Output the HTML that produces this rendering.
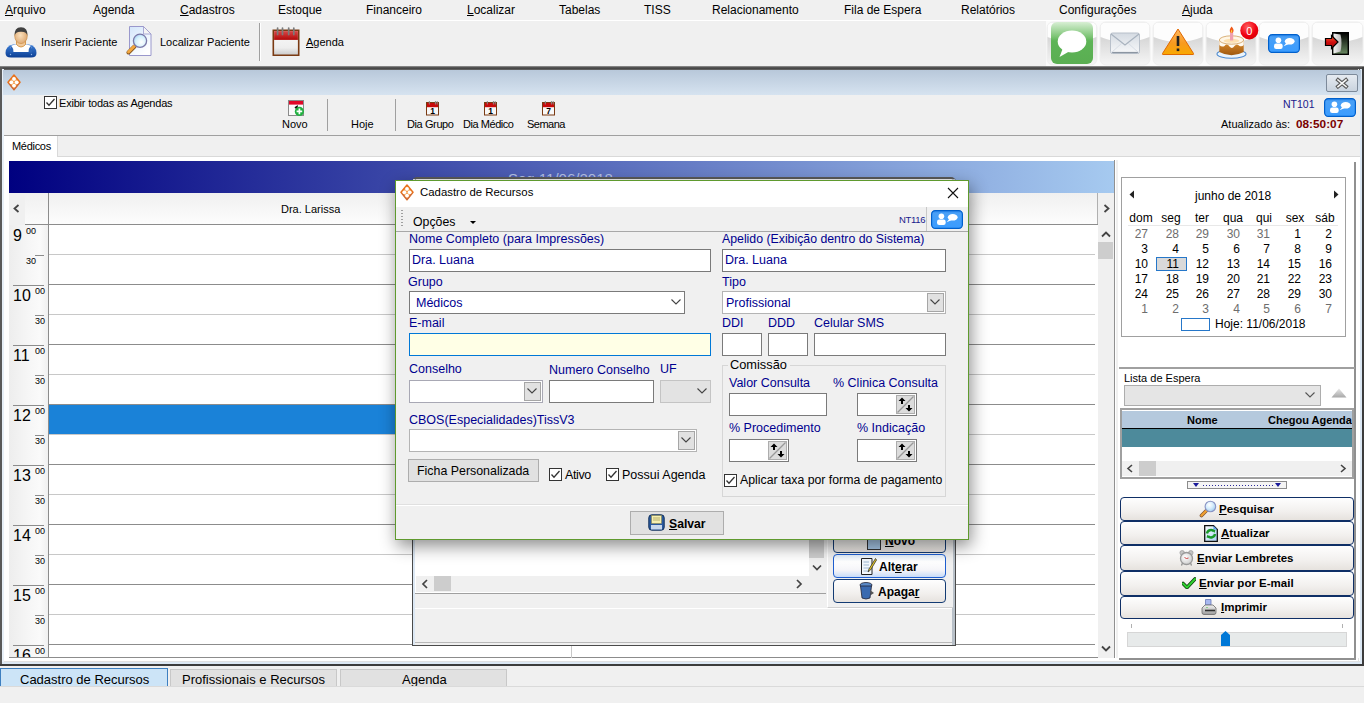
<!DOCTYPE html>
<html><head><meta charset="utf-8">
<style>
*{box-sizing:border-box;margin:0;padding:0}
html,body{width:1364px;height:703px;overflow:hidden;background:#f0f0f0;font-family:"Liberation Sans",sans-serif;font-size:12px;color:#000}
.a{position:absolute}
.t{position:absolute;white-space:nowrap;line-height:1}
u{text-decoration:underline}
</style></head><body>
<svg width="0" height="0" style="position:absolute"><defs>
<linearGradient id="chg" x1="0" y1="0" x2="0" y2="1"><stop offset="0" stop-color="#2a86ee"/><stop offset="0.15" stop-color="#4aa0f6"/><stop offset="1" stop-color="#3a9cff"/></linearGradient>
<symbol id="chat" viewBox="0 0 32 19">
<rect x="0.6" y="0.6" width="30.8" height="17.8" rx="3.6" fill="url(#chg)" stroke="#0060cc" stroke-width="1.2"/>
<circle cx="10.4" cy="6.3" r="2.8" fill="#fff"/>
<rect x="6" y="9.6" width="8.7" height="5.4" rx="2.2" fill="#fff"/>
<ellipse cx="21.7" cy="7.3" rx="4.9" ry="3.3" fill="#fff"/>
<path d="M18.3 9 L15.6 12.2 L20.2 10.2Z" fill="#fff"/>
</symbol></defs></svg>

<!-- MENU BAR -->
<div class="a" style="left:0;top:0;width:1364px;height:20px;background:#f0f0f0"></div>
<div class="a" style="left:0;top:20px;width:1364px;height:1px;background:#fff"></div>
<div class="t" style="left:5px;top:4px;font-size:12px"><u>A</u>rquivo</div>
<div class="t" style="left:93px;top:4px;font-size:12px">Agenda</div>
<div class="t" style="left:180px;top:4px;font-size:12px"><u>C</u>adastros</div>
<div class="t" style="left:278px;top:4px;font-size:12px">Estoque</div>
<div class="t" style="left:366px;top:4px;font-size:12px">Financeiro</div>
<div class="t" style="left:467px;top:4px;font-size:12px"><u>L</u>ocalizar</div>
<div class="t" style="left:559px;top:4px;font-size:12px">Tabelas</div>
<div class="t" style="left:644px;top:4px;font-size:12px">TISS</div>
<div class="t" style="left:712px;top:4px;font-size:12px">Relacionamento</div>
<div class="t" style="left:844px;top:4px;font-size:12px">Fila de Espera</div>
<div class="t" style="left:961px;top:4px;font-size:12px">Relatórios</div>
<div class="t" style="left:1059px;top:4px;font-size:12px">Configurações</div>
<div class="t" style="left:1182px;top:4px;font-size:12px"><u>A</u>juda</div>

<!-- TOOLBAR -->
<div class="a" style="left:0;top:21px;width:1364px;height:46px;background:#f0f0f0"></div>
<svg class="a" style="left:5px;top:25px" width="32" height="33" viewBox="0 0 32 33">
 <defs><linearGradient id="pb" x1="0" y1="0" x2="0" y2="1"><stop offset="0" stop-color="#3d7ed6"/><stop offset="1" stop-color="#0c3f94"/></linearGradient>
 <radialGradient id="pf" cx="0.45" cy="0.45" r="0.6"><stop offset="0" stop-color="#fbe0bc"/><stop offset="1" stop-color="#dba670"/></radialGradient></defs>
 <path d="M0.5 28 Q0.5 21 8 19.5 L24 19.5 Q31.5 21 31.5 28 Q31.5 32.5 26 32.5 L6 32.5 Q0.5 32.5 0.5 28Z" fill="url(#pb)"/>
 <path d="M6.5 20.5 Q4.5 23 5 27 L27 27 Q27.5 23 25.5 20.5 L21 19.5 Q16 23 11 19.5Z" fill="#fff"/>
 <path d="M6.5 21 Q9 24 8.5 27.5 L5 27.5 Q4 24 6.5 21Z M25.5 21 Q23 24 23.5 27.5 L27 27.5 Q28 24 25.5 21Z" fill="#2a64b8"/>
 <circle cx="5.5" cy="29.5" r="0.7" fill="#8fb4e8"/><circle cx="26.5" cy="29.5" r="0.7" fill="#8fb4e8"/>
 <path d="M11.5 14 L11.5 19.5 Q16 24.5 20.5 19.5 L20.5 14Z" fill="#f0c89a" stroke="#d08a30" stroke-width="0.8"/>
 <ellipse cx="16" cy="11" rx="6.3" ry="7.6" fill="url(#pf)" stroke="#c88a40" stroke-width="0.6"/>
 <path d="M9.6 11 Q9 2.2 16 2.2 Q23 2.2 22.4 11 Q21.5 6.5 16 6.8 Q10.5 6.5 9.6 11Z" fill="#404040"/>
</svg>
<div class="t" style="left:41px;top:37px;font-size:11px">Inserir Paciente</div>
<svg class="a" style="left:126px;top:26px" width="26" height="30" viewBox="0 0 26 30">
 <defs><linearGradient id="dg" x1="0" y1="0" x2="0.6" y2="1"><stop offset="0" stop-color="#d4e6fb"/><stop offset="1" stop-color="#ffffff"/></linearGradient>
 <radialGradient id="gl" cx="0.6" cy="0.6" r="0.7"><stop offset="0" stop-color="#ffffff"/><stop offset="0.6" stop-color="#d4f0fc"/><stop offset="1" stop-color="#9ccaf0"/></radialGradient></defs>
 <path d="M3.5 0.5 L17.5 0.5 L25 8 L25 29.5 L3.5 29.5Z" fill="url(#dg)" stroke="#9a98cc" stroke-width="1"/>
 <path d="M17.5 0.5 L17.5 8 L25 8Z" fill="#f4f4f4" stroke="#9a98cc" stroke-width="0.8"/>
 <path d="M2.5 26.5 L8.5 20.5" stroke="#8a5a20" stroke-width="4" stroke-linecap="round"/>
 <path d="M2.5 26 L8.5 20" stroke="#f4a840" stroke-width="2.8" stroke-linecap="round"/>
 <circle cx="14" cy="14.8" r="6.6" fill="url(#gl)" stroke="#7a78a8" stroke-width="1.3"/>
</svg>
<div class="t" style="left:160px;top:37px;font-size:11px">Localizar Paciente</div>
<div class="a" style="left:259px;top:23px;width:1px;height:38px;background:#a0a0a0"></div>
<div class="a" style="left:260px;top:23px;width:1px;height:38px;background:#fff"></div>
<svg class="a" style="left:272px;top:26px" width="28" height="30" viewBox="0 0 28 30">
 <defs><linearGradient id="cg" x1="0" y1="0" x2="0" y2="1"><stop offset="0" stop-color="#fafafa"/><stop offset="0.7" stop-color="#eeeeee"/><stop offset="1" stop-color="#c8c8c8"/></linearGradient>
 <linearGradient id="cr" x1="0" y1="0" x2="0" y2="1"><stop offset="0" stop-color="#d84848"/><stop offset="1" stop-color="#b00808"/></linearGradient></defs>
 <rect x="1.3" y="4.3" width="25.4" height="25" fill="url(#cg)" stroke="#7a3a12" stroke-width="1.6"/>
 <rect x="2.1" y="5.1" width="23.8" height="8.8" fill="url(#cr)"/>
 <g stroke="#7a7a7a" stroke-width="1.7" stroke-linecap="round"><line x1="5.6" y1="2" x2="5.6" y2="8.5"/><line x1="10.5" y1="2" x2="10.5" y2="8.5"/><line x1="16.7" y1="2" x2="16.7" y2="8.5"/><line x1="21.8" y1="2" x2="21.8" y2="8.5"/></g>
</svg>
<div class="t" style="left:306px;top:37px;font-size:11px"><u>A</u>genda</div>

<!-- TOP RIGHT TILES -->
<div class="a" style="left:1046px;top:21px;width:318px;height:45px;background:#fbfbfb"></div>
<svg class="a" style="left:1046px;top:21px" width="318" height="45" viewBox="0 0 318 45">
 <defs>
  <linearGradient id="tileg" x1="0" y1="0" x2="0" y2="1"><stop offset="0.35" stop-color="#d6d6d6"/><stop offset="1" stop-color="#f6f6f6"/></linearGradient>
  <linearGradient id="tile" x1="0" y1="0" x2="0" y2="1"><stop offset="0" stop-color="#ffffff"/><stop offset="0.38" stop-color="#f8f8f8"/><stop offset="0.42" stop-color="#e8e8e8"/><stop offset="1" stop-color="#f2f2f2"/></linearGradient>
  <linearGradient id="grn" x1="0" y1="0" x2="0" y2="1"><stop offset="0" stop-color="#d8efd4"/><stop offset="0.35" stop-color="#7cc474"/><stop offset="0.45" stop-color="#5db456"/><stop offset="1" stop-color="#5aae52"/></linearGradient>
  <linearGradient id="env" x1="0" y1="0" x2="0" y2="1"><stop offset="0" stop-color="#d4dae2"/><stop offset="0.5" stop-color="#e6eaee"/><stop offset="1" stop-color="#f8f9fa"/></linearGradient>
  <linearGradient id="warn" x1="0" y1="0" x2="0" y2="1"><stop offset="0" stop-color="#ffb860"/><stop offset="0.55" stop-color="#f89a20"/><stop offset="1" stop-color="#f8a800"/></linearGradient>
  <linearGradient id="cake" x1="0" y1="0" x2="0" y2="1"><stop offset="0" stop-color="#e09030"/><stop offset="1" stop-color="#a05a10"/></linearGradient>
  <linearGradient id="bb0" x1="0" y1="0" x2="0" y2="1"><stop offset="0" stop-color="#4aa2f4"/><stop offset="1" stop-color="#1670d8"/></linearGradient>
 </defs>
 <rect x="1" y="1" width="50" height="43" rx="6" fill="url(#tileg)" stroke="#efefef"/>
 <path d="M1.5 7 Q1.5 1.5 7 1.5 L45 1.5 Q50.5 1.5 50.5 7 L50.5 16 Q26.0 26 1.5 16Z" fill="#fdfdfd"/>
 <rect x="54" y="1" width="50" height="43" rx="6" fill="url(#tileg)" stroke="#efefef"/>
 <path d="M54.5 7 Q54.5 1.5 60 1.5 L98 1.5 Q103.5 1.5 103.5 7 L103.5 16 Q79.0 26 54.5 16Z" fill="#fdfdfd"/>
 <rect x="107" y="1" width="50" height="43" rx="6" fill="url(#tileg)" stroke="#efefef"/>
 <path d="M107.5 7 Q107.5 1.5 113 1.5 L151 1.5 Q156.5 1.5 156.5 7 L156.5 16 Q132.0 26 107.5 16Z" fill="#fdfdfd"/>
 <rect x="160" y="1" width="50" height="43" rx="6" fill="url(#tileg)" stroke="#efefef"/>
 <path d="M160.5 7 Q160.5 1.5 166 1.5 L204 1.5 Q209.5 1.5 209.5 7 L209.5 16 Q185.0 26 160.5 16Z" fill="#fdfdfd"/>
 <rect x="213" y="1" width="50" height="43" rx="6" fill="url(#tileg)" stroke="#efefef"/>
 <path d="M213.5 7 Q213.5 1.5 219 1.5 L257 1.5 Q262.5 1.5 262.5 7 L262.5 16 Q238.0 26 213.5 16Z" fill="#fdfdfd"/>
 <rect x="266" y="1" width="51" height="43" rx="6" fill="url(#tileg)" stroke="#efefef"/>
 <path d="M266.5 7 Q266.5 1.5 272 1.5 L311 1.5 Q316.5 1.5 316.5 7 L316.5 16 Q291.5 26 266.5 16Z" fill="#fdfdfd"/>
 <!-- green chat -->
 <rect x="5" y="1" width="42" height="42" rx="6" fill="url(#grn)"/>
 <ellipse cx="26" cy="20.5" rx="14.3" ry="11" fill="#fff"/>
 <path d="M17 27 L13.5 36 L24 30Z" fill="#fff"/>
 <!-- mail -->
 <rect x="64.5" y="12" width="29" height="20.5" rx="2" fill="url(#env)" stroke="#b8c0ca"/><path d="M65 31.5 H93" stroke="#8c96a2" stroke-width="1.2"/>
 <path d="M65 13 L79 24 L93 13" fill="none" stroke="#a8b2be" stroke-width="1.2"/>
 <path d="M65 32 L76 22 M93 32 L82 22" fill="none" stroke="#d8dee6" stroke-width="1"/>
 <!-- warning -->
 <path d="M132 8 L147.5 32.5 Q148 33.5 147 33.5 L117 33.5 Q116 33.5 116.5 32.5Z" fill="url(#warn)" stroke="#e06800" stroke-width="1"/>
 <rect x="130.7" y="15" width="2.6" height="10" fill="#222"/>
 <rect x="130.7" y="27.5" width="2.6" height="2.6" fill="#222"/>
 <!-- cake -->
 <ellipse cx="185.5" cy="33" rx="14.5" ry="4.3" fill="#eaf4fc" stroke="#4a88d0" stroke-width="1.1"/>
 <path d="M173.3 19 L173.3 31 Q185.5 37.5 197.7 31 L197.7 19Z" fill="url(#cake)"/>
 <path d="M173.3 19 L173.3 24 Q176 26.5 178.5 25 Q181 22 183.5 25.5 Q186 28.5 188.5 25 Q191 22 193.5 25 Q196 26 197.7 24 L197.7 19Z" fill="#fffaf0"/>
 <ellipse cx="185.5" cy="19" rx="12.2" ry="4.2" fill="#fff6e6" stroke="#c89048" stroke-width="0.7"/>
 <ellipse cx="185.5" cy="19.8" rx="8" ry="2" fill="#fde0b0"/>
 <rect x="184" y="11.5" width="3.2" height="8" fill="#f0a0b0"/>
 <path d="M185.6 5.5 Q188.8 9 186.8 11.8 L184.4 11.8 Q182.6 9 185.6 5.5Z" fill="#f05818"/>
 <path d="M185.6 8.5 Q186.8 10 186 11.5 L185 11.5 Q184.4 10 185.6 8.5Z" fill="#ffd040"/>
 <defs><radialGradient id="badge" cx="0.4" cy="0.3" r="0.8"><stop offset="0" stop-color="#ff6060"/><stop offset="0.6" stop-color="#f00010"/><stop offset="1" stop-color="#d00000"/></radialGradient></defs>
 <circle cx="203.3" cy="9.4" r="9" fill="url(#badge)"/>
 <text x="203.3" y="13.6" text-anchor="middle" font-size="11" font-family="Liberation Sans" fill="#fff">0</text>
 <!-- blue chat -->
 <use href="#chat" x="222" y="13" width="32" height="19"/>
 <!-- exit -->
 <defs><linearGradient id="exg" x1="0" y1="0" x2="0" y2="1"><stop offset="0" stop-color="#000"/><stop offset="1" stop-color="#6a8a62"/></linearGradient>
 <linearGradient id="dor" x1="0" y1="0" x2="1" y2="0"><stop offset="0" stop-color="#f4f4f4"/><stop offset="1" stop-color="#b8b8b8"/></linearGradient>
 <linearGradient id="arr" x1="0" y1="0" x2="0" y2="1"><stop offset="0" stop-color="#ff6030"/><stop offset="0.5" stop-color="#d01010"/><stop offset="1" stop-color="#a00000"/></linearGradient></defs>
 <rect x="286.7" y="11.7" width="15.6" height="21.6" fill="url(#exg)" stroke="#000" stroke-width="1.4"/>
 <path d="M287.5 12.5 L294.5 13.5 Q296.5 22 294.5 30.5 L287.5 32.5Z" fill="url(#dor)"/>
 <path d="M279.5 17.5 H285.5 V14.5 L292 21 L285.5 27.5 V24.5 H279.5Z" fill="url(#arr)" stroke="#000" stroke-width="1.2" stroke-linejoin="miter"/>
</svg>
<!-- MDI FRAME -->
<div class="a" style="left:0;top:66px;width:1364px;height:4px;background:linear-gradient(#9a9a9a,#3c3c3c 50%,#6a6a6a)"></div>
<div class="a" style="left:0;top:67px;width:3px;height:599px;background:#5a5a5a"></div>
<div class="a" style="left:2px;top:69px;width:2px;height:596px;background:#e8f0f8"></div>
<div class="a" style="left:4px;top:658px;width:1356px;height:4px;background:#fff"></div>
<div class="a" style="left:4px;top:661px;width:1356px;height:1px;background:#e0e0e0"></div>
<div class="a" style="left:1358px;top:69px;width:1px;height:593px;background:#e0e0e0"></div>
<div class="a" style="left:1360px;top:69px;width:2px;height:595px;background:#dce8f4"></div>
<div class="a" style="left:2px;top:662px;width:1360px;height:2px;background:#dce8f4"></div>
<div class="a" style="left:1362px;top:67px;width:2px;height:599px;background:#3c3c3c"></div>
<div class="a" style="left:0;top:664px;width:1364px;height:2px;background:#3c3c3c"></div>
<!-- caption -->
<div class="a" style="left:3px;top:70px;width:1358px;height:25px;background:linear-gradient(#b8c8da,#d6e3f0)"></div>
<svg class="a" style="left:7px;top:74px" width="14" height="17" viewBox="0 0 14 17"><path d="M7 1 L13 8.3 L7 15.8 L1 8.3Z" fill="#f5a050" stroke="#e8701a" stroke-width="1.5" stroke-linejoin="round"/><path d="M2 9.5 L7 15.8 L12 9.5" fill="none" stroke="#7a5a9a" stroke-width="0.6" opacity="0.6"/><circle cx="7" cy="4.9" r="1.9" fill="#fff"/><circle cx="7" cy="11.6" r="1.9" fill="#fff"/><circle cx="4.3" cy="8.3" r="1.9" fill="#fff"/><circle cx="9.7" cy="8.3" r="1.9" fill="#fff"/></svg>
<div class="a" style="left:1326px;top:74px;width:32px;height:18px;border:1px solid #7d8a9a;border-radius:2px;background:linear-gradient(#e6ebf1,#c9d3de)"></div>
<svg class="a" style="left:1335px;top:77px" width="14" height="12" viewBox="0 0 14 12"><path d="M3 3 L11 9.5 M11 3 L3 9.5" stroke="#5a5a5a" stroke-width="3.8" stroke-linecap="square"/><path d="M3 3 L11 9.5 M11 3 L3 9.5" stroke="#f8f8f8" stroke-width="1.6" stroke-linecap="square"/></svg>
<!-- mdi toolbar -->
<div class="a" style="left:4px;top:95px;width:1356px;height:40px;background:#f0f0f0"></div>
<div class="a" style="left:4px;top:135px;width:1356px;height:1px;background:#a0a0a0"></div>
<div class="a" style="left:44px;top:96px;width:13px;height:13px;border:1px solid #333;background:#fff"></div>
<svg class="a" style="left:44px;top:96px" width="13" height="13" viewBox="0 0 13 13"><path d="M2.5 6.5 L5 9.3 L10.5 3" fill="none" stroke="#333" stroke-width="1.3"/></svg>
<div class="t" style="left:59px;top:98px;font-size:11px;letter-spacing:-0.2px">Exibir todas as Agendas</div>
<!-- Novo icon -->
<svg class="a" style="left:288px;top:100px" width="17" height="17" viewBox="0 0 17 17">
 <rect x="0.5" y="0.5" width="15" height="15" fill="#fafafa" stroke="#8a8a8a"/>
 <rect x="1" y="1" width="14" height="3.6" fill="#e00828"/>
 <path d="M7 8 L9 6.5 V10" stroke="#111" stroke-width="1.6" fill="none"/>
 <circle cx="11.4" cy="11.4" r="4.6" fill="#20b040"/>
 <path d="M11.4 8.6 V14.2 M8.6 11.4 H14.2" stroke="#fff" stroke-width="1.7"/>
</svg>
<div class="t" style="left:282px;top:119px;font-size:11px">Novo</div>
<div class="a" style="left:327px;top:99px;width:1px;height:32px;background:#a0a0a0"></div>
<div class="t" style="left:351px;top:119px;font-size:11px">Hoje</div>
<div class="a" style="left:395px;top:99px;width:1px;height:32px;background:#a0a0a0"></div>
<svg class="a" style="left:425px;top:100px" width="15" height="16" viewBox="0 0 15 16">
 <rect x="1.5" y="2.5" width="12" height="12.5" fill="#f8f8f8" stroke="#7a3a12"/>
 <rect x="2" y="3" width="11" height="4.2" fill="#c80a0a"/>
 <path d="M4.3 1 V4.5 M10.4 1 V4.5 M12.2 1 V4.5" stroke="#8a8a8a" stroke-width="1"/>
 <text x="7.5" y="13.8" text-anchor="middle" font-size="8.5" font-family="Liberation Sans" font-weight="bold" fill="#000">1</text>
</svg>
<div class="t" style="left:407px;top:119px;font-size:11px;letter-spacing:-0.4px">Dia Grupo</div>
<svg class="a" style="left:483px;top:100px" width="15" height="16" viewBox="0 0 15 16">
 <rect x="1.5" y="2.5" width="12" height="12.5" fill="#f8f8f8" stroke="#7a3a12"/>
 <rect x="2" y="3" width="11" height="4.2" fill="#c80a0a"/>
 <path d="M4.3 1 V4.5 M10.4 1 V4.5 M12.2 1 V4.5" stroke="#8a8a8a" stroke-width="1"/>
 <text x="7.5" y="13.8" text-anchor="middle" font-size="8.5" font-family="Liberation Sans" font-weight="bold" fill="#000">1</text>
</svg>
<div class="t" style="left:463px;top:119px;font-size:11px;letter-spacing:-0.45px">Dia Médico</div>
<svg class="a" style="left:541px;top:100px" width="15" height="16" viewBox="0 0 15 16">
 <rect x="1.5" y="2.5" width="12" height="12.5" fill="#f8f8f8" stroke="#7a3a12"/>
 <rect x="2" y="3" width="11" height="4.2" fill="#c80a0a"/>
 <path d="M4.3 1 V4.5 M10.4 1 V4.5 M12.2 1 V4.5" stroke="#8a8a8a" stroke-width="1"/>
 <text x="7.5" y="13.8" text-anchor="middle" font-size="8.5" font-family="Liberation Sans" font-weight="bold" fill="#000">7</text>
</svg>
<div class="t" style="left:527px;top:119px;font-size:11px;letter-spacing:-0.5px">Semana</div>
<!-- NT101 / atualizado -->
<div class="t" style="left:1283px;top:99px;font-size:10.5px;color:#1a1a8c">NT101</div>
<svg class="a" style="left:1324px;top:98px" width="32" height="19"><use href="#chat" width="32" height="19"/></svg>
<div class="t" style="left:1221px;top:119px;font-size:11px">Atualizado às:</div>
<div class="t" style="left:1296px;top:118.5px;font-size:11.8px;font-weight:bold;color:#7a0000">08:50:07</div>
<!-- tab strip -->
<div class="a" style="left:4px;top:136px;width:1356px;height:522px;background:#fff"></div>
<div class="a" style="left:57px;top:136px;width:1303px;height:21px;background:#f0f0f0;border-left:1px solid #d9d9d9;border-bottom:1px solid #d9d9d9"></div>
<div class="t" style="left:12px;top:141px;font-size:11px;letter-spacing:-0.3px">Médicos</div>
<!-- SCHEDULE GRID -->
<div class="a" style="left:0;top:0;width:1364px;height:658px;overflow:hidden">
<div class="a" style="left:9px;top:161px;width:1106px;height:32px;background:linear-gradient(to right,#000080,#a6caf0)"></div>
<div class="t" style="left:508px;top:171px;font-size:15px;color:#b4c0e4">Seg 11/06/2018</div>
<div class="a" style="left:9px;top:193px;width:16px;height:32px;background:#f0f0f0"></div>
<svg class="a" style="left:12px;top:204px" width="9" height="9" viewBox="0 0 9 9"><path d="M6.5 1 L2.5 4.5 L6.5 8" fill="none" stroke="#444" stroke-width="1.8"/></svg>
<div class="a" style="left:25px;top:193px;width:23px;height:32px;background:linear-gradient(#f0f0f0,#fbfbfb)"></div>
<div class="a" style="left:48px;top:193px;width:1050px;height:32px;background:linear-gradient(#f0f0f0,#fdfdfd);border-left:1px solid #8c8c8c;border-right:1px solid #b0b0b0"></div>
<div class="a" style="left:25px;top:224px;width:1073px;height:1px;background:#8c8c8c"></div>
<div class="t" style="left:281px;top:204px;font-size:11px">Dra. Larissa</div>
<div class="a" style="left:9px;top:225px;width:39px;height:433px;background:linear-gradient(to right,#ededed,#f6f6f6 50%,#fafafa 80%,#f0f0f0)"></div>
<div class="a" style="left:48px;top:225px;width:1px;height:433px;background:#8c8c8c"></div>
<div class="a" style="left:49px;top:225px;width:1046px;height:433px;background:#fff"></div>
<div class="a" style="left:49px;top:254px;width:1046px;height:1px;background:#c8c8c8"></div>
<div class="a" style="left:35px;top:255px;width:9px;height:1px;background:#8c8c8c"></div>
<div class="t" style="left:26px;top:257.3px;font-size:9px">30</div>
<div class="t" style="left:13px;top:227.5px;font-size:16px">9</div>
<div class="t" style="left:26px;top:227px;font-size:9px">00</div>
<div class="a" style="left:49px;top:284px;width:1046px;height:1px;background:#8c8c8c"></div>
<div class="a" style="left:13px;top:285px;width:31px;height:1px;background:#8c8c8c"></div>
<div class="a" style="left:49px;top:314px;width:1046px;height:1px;background:#c8c8c8"></div>
<div class="a" style="left:35px;top:315px;width:9px;height:1px;background:#8c8c8c"></div>
<div class="t" style="left:35px;top:317.3px;font-size:9px">30</div>
<div class="t" style="left:13px;top:287.5px;font-size:16px">10</div>
<div class="t" style="left:35px;top:287px;font-size:9px">00</div>
<div class="a" style="left:49px;top:344px;width:1046px;height:1px;background:#8c8c8c"></div>
<div class="a" style="left:13px;top:345px;width:31px;height:1px;background:#8c8c8c"></div>
<div class="a" style="left:49px;top:374px;width:1046px;height:1px;background:#c8c8c8"></div>
<div class="a" style="left:35px;top:375px;width:9px;height:1px;background:#8c8c8c"></div>
<div class="t" style="left:35px;top:377.3px;font-size:9px">30</div>
<div class="t" style="left:13px;top:347.5px;font-size:16px">11</div>
<div class="t" style="left:35px;top:347px;font-size:9px">00</div>
<div class="a" style="left:49px;top:405px;width:522px;height:30px;background:#1a82d8"></div>
<div class="a" style="left:49px;top:404px;width:1046px;height:1px;background:#8c8c8c"></div>
<div class="a" style="left:13px;top:405px;width:31px;height:1px;background:#8c8c8c"></div>
<div class="a" style="left:49px;top:434px;width:1046px;height:1px;background:#c8c8c8"></div>
<div class="a" style="left:35px;top:435px;width:9px;height:1px;background:#8c8c8c"></div>
<div class="t" style="left:35px;top:437.3px;font-size:9px">30</div>
<div class="t" style="left:13px;top:407.5px;font-size:16px">12</div>
<div class="t" style="left:35px;top:407px;font-size:9px">00</div>
<div class="a" style="left:49px;top:464px;width:1046px;height:1px;background:#8c8c8c"></div>
<div class="a" style="left:13px;top:465px;width:31px;height:1px;background:#8c8c8c"></div>
<div class="a" style="left:49px;top:494px;width:1046px;height:1px;background:#c8c8c8"></div>
<div class="a" style="left:35px;top:495px;width:9px;height:1px;background:#8c8c8c"></div>
<div class="t" style="left:35px;top:497.3px;font-size:9px">30</div>
<div class="t" style="left:13px;top:467.5px;font-size:16px">13</div>
<div class="t" style="left:35px;top:467px;font-size:9px">00</div>
<div class="a" style="left:49px;top:524px;width:1046px;height:1px;background:#8c8c8c"></div>
<div class="a" style="left:13px;top:525px;width:31px;height:1px;background:#8c8c8c"></div>
<div class="a" style="left:49px;top:554px;width:1046px;height:1px;background:#c8c8c8"></div>
<div class="a" style="left:35px;top:555px;width:9px;height:1px;background:#8c8c8c"></div>
<div class="t" style="left:35px;top:557.3px;font-size:9px">30</div>
<div class="t" style="left:13px;top:527.5px;font-size:16px">14</div>
<div class="t" style="left:35px;top:527px;font-size:9px">00</div>
<div class="a" style="left:49px;top:584px;width:1046px;height:1px;background:#8c8c8c"></div>
<div class="a" style="left:13px;top:585px;width:31px;height:1px;background:#8c8c8c"></div>
<div class="a" style="left:49px;top:614px;width:1046px;height:1px;background:#c8c8c8"></div>
<div class="a" style="left:35px;top:615px;width:9px;height:1px;background:#8c8c8c"></div>
<div class="t" style="left:35px;top:617.3px;font-size:9px">30</div>
<div class="t" style="left:13px;top:587.5px;font-size:16px">15</div>
<div class="t" style="left:35px;top:587px;font-size:9px">00</div>
<div class="a" style="left:49px;top:644px;width:1046px;height:1px;background:#8c8c8c"></div>
<div class="a" style="left:13px;top:645px;width:31px;height:1px;background:#8c8c8c"></div>
<div class="t" style="left:13px;top:647.5px;font-size:16px">16</div>
<div class="t" style="left:35px;top:647px;font-size:9px">00</div>
<div class="a" style="left:9px;top:657px;width:1089px;height:1px;background:#8c8c8c"></div>
<div class="a" style="left:571px;top:193px;width:1px;height:465px;background:#c8c8c8"></div>
<div class="a" style="left:1098px;top:193px;width:16px;height:465px;background:#f0f0f0"></div>
<svg class="a" style="left:1102px;top:204px" width="9" height="9" viewBox="0 0 9 9"><path d="M2.5 1 L6.5 4.5 L2.5 8" fill="none" stroke="#444" stroke-width="1.8"/></svg>
<svg class="a" style="left:1101px;top:230px" width="10" height="8" viewBox="0 0 10 8"><path d="M1 6.5 L5 2.5 L9 6.5" fill="none" stroke="#444" stroke-width="1.8"/></svg>
<div class="a" style="left:1098px;top:242px;width:15px;height:17px;background:#cdcdcd"></div>
<svg class="a" style="left:1101px;top:645px" width="10" height="8" viewBox="0 0 10 8"><path d="M1 1.5 L5 5.5 L9 1.5" fill="none" stroke="#444" stroke-width="1.8"/></svg>
<div class="a" style="left:1114px;top:160px;width:1px;height:498px;background:#909090"></div>
<div class="a" style="left:1116px;top:160px;width:2px;height:498px;background:#f0f0f0"></div>
</div>
<!-- RIGHT PANEL -->
<div class="a" style="left:1116px;top:156px;width:244px;height:1px;background:#d9d9d9"></div>
<div class="a" style="left:1118px;top:160px;width:238px;height:498px;background:#fff"></div>
<div class="a" style="left:1354px;top:162px;width:2px;height:498px;background:#909090"></div>
<div class="a" style="left:1119px;top:658px;width:237px;height:2px;background:#909090"></div>
<div class="a" style="left:1121px;top:177px;width:225px;height:160px;border:1px solid #a0a0a0;background:#fff"></div>
<svg class="a" style="left:1129px;top:190px" width="6" height="9" viewBox="0 0 6 9"><path d="M5 0.5 L0.5 4.5 L5 8.5Z" fill="#222"/></svg>
<svg class="a" style="left:1333px;top:190px" width="6" height="9" viewBox="0 0 6 9"><path d="M1 0.5 L5.5 4.5 L1 8.5Z" fill="#222"/></svg>
<div class="t" style="left:1195px;top:190px;font-size:12px">junho de 2018</div>
<div class="t" style="left:1121px;top:212px;width:40px;text-align:center;font-size:12px">dom</div>
<div class="t" style="left:1151px;top:212px;width:40px;text-align:center;font-size:12px">seg</div>
<div class="t" style="left:1182px;top:212px;width:40px;text-align:center;font-size:12px">ter</div>
<div class="t" style="left:1213px;top:212px;width:40px;text-align:center;font-size:12px">qua</div>
<div class="t" style="left:1244px;top:212px;width:40px;text-align:center;font-size:12px">qui</div>
<div class="t" style="left:1275px;top:212px;width:40px;text-align:center;font-size:12px">sex</div>
<div class="t" style="left:1305px;top:212px;width:40px;text-align:center;font-size:12px">sáb</div>
<div class="a" style="left:1128px;top:225px;width:210px;height:1px;background:#e8e8e8"></div>
<div class="a" style="left:1156px;top:257px;width:31px;height:14px;background:#d9d9d9;border:1px solid #2677c9"></div>
<div class="t" style="left:1118px;top:228px;width:30px;text-align:right;font-size:12px;color:#6d6d6d">27</div>
<div class="t" style="left:1149px;top:228px;width:30px;text-align:right;font-size:12px;color:#6d6d6d">28</div>
<div class="t" style="left:1179px;top:228px;width:30px;text-align:right;font-size:12px;color:#6d6d6d">29</div>
<div class="t" style="left:1210px;top:228px;width:30px;text-align:right;font-size:12px;color:#6d6d6d">30</div>
<div class="t" style="left:1240px;top:228px;width:30px;text-align:right;font-size:12px;color:#6d6d6d">31</div>
<div class="t" style="left:1271px;top:228px;width:30px;text-align:right;font-size:12px;color:#000">1</div>
<div class="t" style="left:1302px;top:228px;width:30px;text-align:right;font-size:12px;color:#000">2</div>
<div class="t" style="left:1118px;top:243px;width:30px;text-align:right;font-size:12px;color:#000">3</div>
<div class="t" style="left:1149px;top:243px;width:30px;text-align:right;font-size:12px;color:#000">4</div>
<div class="t" style="left:1179px;top:243px;width:30px;text-align:right;font-size:12px;color:#000">5</div>
<div class="t" style="left:1210px;top:243px;width:30px;text-align:right;font-size:12px;color:#000">6</div>
<div class="t" style="left:1240px;top:243px;width:30px;text-align:right;font-size:12px;color:#000">7</div>
<div class="t" style="left:1271px;top:243px;width:30px;text-align:right;font-size:12px;color:#000">8</div>
<div class="t" style="left:1302px;top:243px;width:30px;text-align:right;font-size:12px;color:#000">9</div>
<div class="t" style="left:1118px;top:258px;width:30px;text-align:right;font-size:12px;color:#000">10</div>
<div class="t" style="left:1149px;top:258px;width:30px;text-align:right;font-size:12px;color:#000">11</div>
<div class="t" style="left:1179px;top:258px;width:30px;text-align:right;font-size:12px;color:#000">12</div>
<div class="t" style="left:1210px;top:258px;width:30px;text-align:right;font-size:12px;color:#000">13</div>
<div class="t" style="left:1240px;top:258px;width:30px;text-align:right;font-size:12px;color:#000">14</div>
<div class="t" style="left:1271px;top:258px;width:30px;text-align:right;font-size:12px;color:#000">15</div>
<div class="t" style="left:1302px;top:258px;width:30px;text-align:right;font-size:12px;color:#000">16</div>
<div class="t" style="left:1118px;top:273px;width:30px;text-align:right;font-size:12px;color:#000">17</div>
<div class="t" style="left:1149px;top:273px;width:30px;text-align:right;font-size:12px;color:#000">18</div>
<div class="t" style="left:1179px;top:273px;width:30px;text-align:right;font-size:12px;color:#000">19</div>
<div class="t" style="left:1210px;top:273px;width:30px;text-align:right;font-size:12px;color:#000">20</div>
<div class="t" style="left:1240px;top:273px;width:30px;text-align:right;font-size:12px;color:#000">21</div>
<div class="t" style="left:1271px;top:273px;width:30px;text-align:right;font-size:12px;color:#000">22</div>
<div class="t" style="left:1302px;top:273px;width:30px;text-align:right;font-size:12px;color:#000">23</div>
<div class="t" style="left:1118px;top:288px;width:30px;text-align:right;font-size:12px;color:#000">24</div>
<div class="t" style="left:1149px;top:288px;width:30px;text-align:right;font-size:12px;color:#000">25</div>
<div class="t" style="left:1179px;top:288px;width:30px;text-align:right;font-size:12px;color:#000">26</div>
<div class="t" style="left:1210px;top:288px;width:30px;text-align:right;font-size:12px;color:#000">27</div>
<div class="t" style="left:1240px;top:288px;width:30px;text-align:right;font-size:12px;color:#000">28</div>
<div class="t" style="left:1271px;top:288px;width:30px;text-align:right;font-size:12px;color:#000">29</div>
<div class="t" style="left:1302px;top:288px;width:30px;text-align:right;font-size:12px;color:#000">30</div>
<div class="t" style="left:1118px;top:303px;width:30px;text-align:right;font-size:12px;color:#6d6d6d">1</div>
<div class="t" style="left:1149px;top:303px;width:30px;text-align:right;font-size:12px;color:#6d6d6d">2</div>
<div class="t" style="left:1179px;top:303px;width:30px;text-align:right;font-size:12px;color:#6d6d6d">3</div>
<div class="t" style="left:1210px;top:303px;width:30px;text-align:right;font-size:12px;color:#6d6d6d">4</div>
<div class="t" style="left:1240px;top:303px;width:30px;text-align:right;font-size:12px;color:#6d6d6d">5</div>
<div class="t" style="left:1271px;top:303px;width:30px;text-align:right;font-size:12px;color:#6d6d6d">6</div>
<div class="t" style="left:1302px;top:303px;width:30px;text-align:right;font-size:12px;color:#6d6d6d">7</div>
<div class="a" style="left:1181px;top:318px;width:29px;height:13px;border:1px solid #2677c9;background:#fff"></div>
<div class="t" style="left:1215px;top:318px;font-size:12px">Hoje: 11/06/2018</div>
<div class="a" style="left:1119px;top:367px;width:236px;height:2px;background:#a0a0a0"></div>
<div class="t" style="left:1124px;top:373px;font-size:11px">Lista de Espera</div>
<div class="a" style="left:1124px;top:385px;width:197px;height:21px;background:#e5e5e5;border:1px solid #adadad"></div>
<svg class="a" style="left:1305px;top:392px" width="10" height="6" viewBox="0 0 10 6"><path d="M0.5 0.5 L5 5 L9.5 0.5" fill="none" stroke="#555" stroke-width="1.1"/></svg>
<svg class="a" style="left:1331px;top:388px" width="16" height="10" viewBox="0 0 16 10"><defs><linearGradient id="tri" x1="0" y1="0" x2="0" y2="1"><stop offset="0" stop-color="#e8e8e8"/><stop offset="1" stop-color="#a8a8a8"/></linearGradient></defs><path d="M8 0.5 L15.5 9.5 L0.5 9.5Z" fill="url(#tri)"/></svg>
<div class="a" style="left:1120px;top:408px;width:234px;height:71px;border:2px solid #a0a0a0;border-right-width:2px;background:#fff"></div>
<div class="a" style="left:1122px;top:411px;width:230px;height:17px;background:#b5c9dd"></div>
<div class="a" style="left:1122px;top:428px;width:230px;height:1px;background:#000"></div>
<div class="t" style="left:1187px;top:415px;font-size:11px;font-weight:bold">Nome</div>
<div class="a" style="left:1268px;top:411px;width:84px;height:17px;overflow:hidden"><div class="t" style="left:0;top:4px;font-size:11px;font-weight:bold">Chegou Agenda</div></div>
<div class="a" style="left:1122px;top:429px;width:230px;height:18px;background:#4d8a9b"></div>
<div class="a" style="left:1122px;top:461px;width:230px;height:15px;background:#f0f0f0"></div>
<svg class="a" style="left:1126px;top:464px" width="8" height="9" viewBox="0 0 8 9"><path d="M6 1 L2 4.5 L6 8" fill="none" stroke="#444" stroke-width="1.6"/></svg>
<div class="a" style="left:1139px;top:461px;width:17px;height:15px;background:#cdcdcd"></div>
<svg class="a" style="left:1339px;top:464px" width="8" height="9" viewBox="0 0 8 9"><path d="M2 1 L6 4.5 L2 8" fill="none" stroke="#444" stroke-width="1.6"/></svg>
<div class="a" style="left:1187px;top:481px;width:100px;height:8px;border:1px solid #8c8c8c;background:#f4f4f4"></div>
<div class="a" style="left:1203px;top:485px;width:70px;height:1px;background:repeating-linear-gradient(to right,#2a2a9a 0 1px,transparent 1px 3px)"></div>
<svg class="a" style="left:1193px;top:483px" width="6" height="4" viewBox="0 0 6 4"><path d="M0 0 H6 L3 4Z" fill="#1a1a9a"/></svg>
<svg class="a" style="left:1275px;top:483px" width="6" height="4" viewBox="0 0 6 4"><path d="M0 0 H6 L3 4Z" fill="#1a1a9a"/></svg>
<div class="a" style="left:1120px;top:497px;width:234px;height:24px;border:1px solid #0f2f66;border-left-width:1.6px;border-right-width:1.6px;border-radius:4px;background:linear-gradient(#fefefe,#f2f0ee 60%,#e6e2de)"></div>
<div class="a" style="left:1120px;top:521px;width:234px;height:24px;border:1px solid #0f2f66;border-left-width:1.6px;border-right-width:1.6px;border-radius:4px;background:linear-gradient(#fefefe,#f2f0ee 60%,#e6e2de)"></div>
<div class="a" style="left:1120px;top:545px;width:234px;height:26px;border:1px solid #0f2f66;border-left-width:1.6px;border-right-width:1.6px;border-radius:4px;background:linear-gradient(#fefefe,#f2f0ee 60%,#e6e2de)"></div>
<div class="a" style="left:1120px;top:571px;width:234px;height:25px;border:1px solid #0f2f66;border-left-width:1.6px;border-right-width:1.6px;border-radius:4px;background:linear-gradient(#fefefe,#f2f0ee 60%,#e6e2de)"></div>
<div class="a" style="left:1120px;top:596px;width:234px;height:23px;border:1px solid #0f2f66;border-left-width:1.6px;border-right-width:1.6px;border-radius:4px;background:linear-gradient(#fefefe,#f2f0ee 60%,#e6e2de)"></div>
<div class="t" style="left:1219px;top:504px;font-size:11.5px;font-weight:bold"><u>P</u>esquisar</div>
<svg class="a" style="left:1199px;top:500px" width="18" height="18" viewBox="0 0 18 18"><defs><radialGradient id="mg" cx="0.4" cy="0.35" r="0.7"><stop offset="0" stop-color="#ffffff"/><stop offset="0.5" stop-color="#d4ecfc"/><stop offset="1" stop-color="#9cc8ee"/></radialGradient></defs><path d="M2.5 15.5 L7.5 10.5" stroke="#7a5030" stroke-width="3.6" stroke-linecap="round"/><path d="M2.5 15.5 L7.5 10.5" stroke="#f0a030" stroke-width="2.4" stroke-linecap="round"/><circle cx="11.4" cy="6.5" r="5.3" fill="url(#mg)" stroke="#8a94c4" stroke-width="1.1"/></svg>
<div class="t" style="left:1221px;top:528px;font-size:11.5px;font-weight:bold"><u>A</u>tualizar</div>
<svg class="a" style="left:1204px;top:525px" width="14" height="17" viewBox="0 0 14 17"><defs><linearGradient id="dgr" x1="0" y1="0" x2="1" y2="1"><stop offset="0" stop-color="#ffffff"/><stop offset="1" stop-color="#a8d0f4"/></linearGradient></defs><path d="M0.7 0.7 H9.5 L13.3 4.5 V16.3 H0.7Z" fill="url(#dgr)" stroke="#111" stroke-width="1.3"/><path d="M9.5 0.7 V4.5 H13.3Z" fill="#5aa0e8"/><path d="M3 8.5 A4 4 0 0 1 10 6.5" fill="none" stroke="#1a9a2a" stroke-width="2.4"/><path d="M11 9 A4 4 0 0 1 4 11" fill="none" stroke="#1a9a2a" stroke-width="2.4"/><path d="M8.5 4.5 L11.5 5 L10.5 8Z M5.5 13 L2.5 12.5 L3.5 9.5Z" fill="#1a9a2a"/></svg>
<div class="t" style="left:1197px;top:553px;font-size:11.5px;font-weight:bold"><u>E</u>nviar Lembretes</div>
<svg class="a" style="left:1179px;top:550px" width="15" height="16" viewBox="0 0 15 16"><defs><radialGradient id="clg" cx="0.4" cy="0.4" r="0.7"><stop offset="0" stop-color="#ffffff"/><stop offset="1" stop-color="#c8c8c8"/></radialGradient></defs><circle cx="3.2" cy="2.8" r="2.3" fill="#c4c4c4" stroke="#909090" stroke-width="0.6"/><circle cx="11.8" cy="2.8" r="2.3" fill="#c4c4c4" stroke="#909090" stroke-width="0.6"/><path d="M3.5 13 L2.5 15.5 M11.5 13 L12.5 15.5" stroke="#888" stroke-width="1.2"/><circle cx="7.5" cy="8.5" r="6" fill="url(#clg)" stroke="#9a9a9a" stroke-width="1.3"/><path d="M7.5 8.5 L5.5 7.5 M7.5 8.5 L9.5 8" stroke="#c83030" stroke-width="0.9"/></svg>
<div class="t" style="left:1199px;top:578px;font-size:11.5px;font-weight:bold"><u>E</u>nviar por E-mail</div>
<svg class="a" style="left:1182px;top:577px" width="14" height="12" viewBox="0 0 14 12"><path d="M1 6.5 L5 10.5 L13 2" fill="none" stroke="#0a3a0a" stroke-width="3.6" stroke-linejoin="round" stroke-linecap="round"/><path d="M1 6.5 L5 10.5 L13 2" fill="none" stroke="#30d030" stroke-width="2" stroke-linejoin="round" stroke-linecap="round"/></svg>
<div class="t" style="left:1221px;top:602px;font-size:11.5px;font-weight:bold"><u>I</u>mprimir</div>
<svg class="a" style="left:1201px;top:599px" width="16" height="16" viewBox="0 0 16 16"><defs><linearGradient id="prg" x1="0" y1="0" x2="0" y2="1"><stop offset="0" stop-color="#f4f4f4"/><stop offset="1" stop-color="#9a9a9a"/></linearGradient></defs><path d="M4.5 0.5 H10 V6 H4.5Z" fill="#a8b8f0" stroke="#6878b8" stroke-width="0.8"/><path d="M1 9 L4 6 H12 L15 9 V13.5 Q15 15.5 13 15.5 H3 Q1 15.5 1 13.5Z" fill="url(#prg)" stroke="#6a6a6a" stroke-width="0.8"/><path d="M4 11.5 H14" stroke="#303030" stroke-width="1.6"/><circle cx="6" cy="8.5" r="0.6" fill="#30c030"/></svg>
<!-- slider -->
<div class="a" style="left:1131px;top:624px;width:1px;height:4px;background:#b0b0b0"></div>
<div class="a" style="left:1342px;top:624px;width:1px;height:4px;background:#b0b0b0"></div>
<div class="a" style="left:1127px;top:632px;width:220px;height:15px;background:#e7eaea;border:1px solid #d6d6d6"></div>
<svg class="a" style="left:1221px;top:631px" width="9" height="15" viewBox="0 0 9 15"><path d="M0 4 L4.5 0 L9 4 V15 H0Z" fill="#0078d7"/></svg>
<!-- BACKGROUND WINDOW (Profissionais e Recursos) -->
<div class="a" style="left:412px;top:177px;width:544px;height:469px;background:#f0f0f0;border:1px solid #4a4a4a;border-top:2px solid #5a5a5a;border-radius:5px 5px 0 0"></div>
<div class="a" style="left:413px;top:179px;width:2px;height:466px;background:#dce8f4"></div>
<div class="a" style="left:415px;top:179px;width:1px;height:415px;background:#a0a0a8"></div>
<div class="a" style="left:952px;top:179px;width:3px;height:466px;background:#b8c0c8"></div>
<!-- list -->
<div class="a" style="left:415px;top:539px;width:411px;height:55px;background:#fff;border-bottom:1px solid #a0a0a0"></div>
<div class="a" style="left:416px;top:576px;width:393px;height:16px;background:#f0f0f0"></div>
<svg class="a" style="left:421px;top:579px" width="8" height="10" viewBox="0 0 8 10"><path d="M6 1 L2 5 L6 9" fill="none" stroke="#444" stroke-width="1.7"/></svg>
<div class="a" style="left:434px;top:576px;width:17px;height:15px;background:#cdcdcd"></div>
<svg class="a" style="left:795px;top:579px" width="8" height="10" viewBox="0 0 8 10"><path d="M2 1 L6 5 L2 9" fill="none" stroke="#444" stroke-width="1.7"/></svg>
<div class="a" style="left:809px;top:539px;width:17px;height:54px;background:#f0f0f0"></div>
<div class="a" style="left:809px;top:539px;width:15px;height:19px;background:#cdcdcd"></div>
<svg class="a" style="left:812px;top:564px" width="10" height="8" viewBox="0 0 10 8"><path d="M1 1.5 L5 5.5 L9 1.5" fill="none" stroke="#444" stroke-width="1.7"/></svg>
<!-- buttons panel -->
<div class="a" style="left:827px;top:539px;width:126px;height:69px;background:#f0f0f0;border-left:1px solid #fff;border-bottom:1px solid #d0d0d0"></div>
<div class="a" style="left:833px;top:530px;width:113px;height:23px;border:1.5px solid #133b73;border-radius:4px;background:linear-gradient(#fefefe,#f2f0ee 60%,#e6e2de)"></div>
<svg class="a" style="left:867px;top:534px" width="15" height="16" viewBox="0 0 15 16"><rect x="0.5" y="0.5" width="13" height="15" fill="#a8c8e8" stroke="#333"/></svg>
<div class="t" style="left:885px;top:535px;font-size:12px;font-weight:bold"><u>N</u>ovo</div>
<div class="a" style="left:833px;top:554px;width:113px;height:24px;border:1.5px solid #1f5fd0;border-radius:4px;background:linear-gradient(#e4f0fc,#ffffff 30%,#f4f4f8 70%,#c8dcf8)"></div>
<svg class="a" style="left:861px;top:557px" width="16" height="18" viewBox="0 0 16 18"><path d="M0.5 1.5 H11 V17.5 H0.5Z" fill="#f4f8fc" stroke="#222"/><path d="M2.5 5 H8 M2.5 8 H8 M2.5 11 H8 M2.5 14 H8" stroke="#8aa8c8" stroke-width="0.8"/><path d="M14.5 1.5 L8 12 L7 15 L9.5 13 L15.5 3Z" fill="#f0d020" stroke="#333" stroke-width="0.8"/></svg>
<div class="t" style="left:879px;top:561px;font-size:12px;font-weight:bold">Alt<u>e</u>rar</div>
<div class="a" style="left:833px;top:579px;width:113px;height:24px;border:1.5px solid #133b73;border-radius:4px;background:linear-gradient(#fefefe,#f2f0ee 60%,#e6e2de)"></div>
<svg class="a" style="left:858px;top:582px" width="17" height="18" viewBox="0 0 17 18"><ellipse cx="8" cy="3" rx="6" ry="2.5" fill="#5a8ac8" stroke="#223" stroke-width="0.8"/><path d="M2.5 4 L4 16 Q8 18 12 16 L13.5 4Z" fill="#3a6ab0" stroke="#223" stroke-width="0.8"/><path d="M12 8 L16 11 L13 13Z" fill="#555"/></svg>
<div class="t" style="left:878px;top:586px;font-size:12px;font-weight:bold">Apaga<u>r</u></div>
<!-- bottom panel -->
<div class="a" style="left:415px;top:608px;width:537px;height:35px;background:#f0f0f0;border-top:1px solid #fff;border-bottom:1px solid #b8b8b8"></div>
<!-- DIALOG -->
<div class="a" style="left:395px;top:180px;width:574px;height:360px;background:#f0f0f0;border:1px solid #5f9a2e;box-shadow:2px 6px 16px rgba(0,0,0,0.45)"></div>
<div class="a" style="left:396px;top:181px;width:572px;height:26px;background:#fff"></div>
<svg class="a" style="left:400px;top:184px" width="14" height="17" viewBox="0 0 14 17"><path d="M7 1 L13 8.3 L7 15.8 L1 8.3Z" fill="#f5a050" stroke="#e8701a" stroke-width="1.5" stroke-linejoin="round"/><path d="M2 9.5 L7 15.8 L12 9.5" fill="none" stroke="#7a5a9a" stroke-width="0.6" opacity="0.6"/><circle cx="7" cy="4.9" r="1.9" fill="#fff"/><circle cx="7" cy="11.6" r="1.9" fill="#fff"/><circle cx="4.3" cy="8.3" r="1.9" fill="#fff"/><circle cx="9.7" cy="8.3" r="1.9" fill="#fff"/></svg>
<div class="t" style="left:420px;top:187px;font-size:11.4px;color:#000;">Cadastro de Recursos</div>
<svg class="a" style="left:947px;top:187px" width="12" height="12" viewBox="0 0 12 12"><path d="M1 1 L11 11 M11 1 L1 11" stroke="#111" stroke-width="1.1"/></svg>
<div class="a" style="left:396px;top:208px;width:572px;height:24px;background:#f0f0f0;border-bottom:1px solid #a8a8a8"></div>
<div class="a" style="left:401px;top:210px;width:2px;height:18px;background:repeating-linear-gradient(#a0a0a0 0 1px,transparent 1px 3px)"></div>
<div class="t" style="left:413px;top:215.5px;font-size:12.3px;color:#000;">Opções</div>
<svg class="a" style="left:470px;top:221px" width="6" height="3" viewBox="0 0 6 3"><path d="M0 0 H6 L3 3Z" fill="#000"/></svg>
<div class="t" style="left:899px;top:215px;font-size:9.5px;color:#1a1a8c;letter-spacing:-0.3px">NT116</div>
<div class="a" style="left:926px;top:207px;width:1px;height:24px;background:#c8c8c8"></div>
<svg class="a" style="left:931px;top:210px" width="32" height="19"><use href="#chat" width="32" height="19"/></svg>
<div class="t" style="left:409px;top:232.5px;font-size:12.5px;color:#00008f;">Nome Completo (para Impressões)</div>
<div class="t" style="left:722px;top:232.5px;font-size:12.3px;color:#00008f;">Apelido (Exibição dentro do Sistema)</div>
<div class="a" style="left:409px;top:249px;width:302px;height:23px;background:#fff;border:1px solid #7a7a7a"></div>
<div class="a" style="left:722px;top:249px;width:224px;height:23px;background:#fff;border:1px solid #7a7a7a"></div>
<div class="t" style="left:412px;top:253.5px;font-size:12.5px;color:#00008f;">Dra. Luana</div>
<div class="t" style="left:725px;top:253.5px;font-size:12.5px;color:#00008f;">Dra. Luana</div>
<div class="t" style="left:408px;top:276px;font-size:12.5px;color:#00008f;">Grupo</div>
<div class="t" style="left:722px;top:276px;font-size:12.5px;color:#00008f;">Tipo</div>
<div class="a" style="left:409px;top:291px;width:276px;height:23px;background:#fff;border:1px solid #7a7a7a"></div>
<svg class="a" style="left:671px;top:299px" width="10" height="6" viewBox="0 0 10 6"><path d="M0.5 0.5 L5 5 L9.5 0.5" fill="none" stroke="#444" stroke-width="1.1"/></svg>
<div class="t" style="left:416px;top:297px;font-size:12.5px;color:#00008f;">Médicos</div>
<div class="a" style="left:722px;top:291px;width:224px;height:23px;background:#fff;border:1px solid #b4b4b4"></div>
<div class="a" style="left:927px;top:293px;width:17px;height:19px;background:#e1e1e1;border:1px solid #a6a6a6"></div>
<svg class="a" style="left:930px;top:299px" width="10" height="6" viewBox="0 0 10 6"><path d="M0.5 0.5 L5 5 L9.5 0.5" fill="none" stroke="#444" stroke-width="1.1"/></svg>
<div class="t" style="left:726px;top:297px;font-size:12.5px;color:#00008f;">Profissional</div>
<div class="t" style="left:409px;top:316.5px;font-size:12.5px;color:#00008f;">E-mail</div>
<div class="t" style="left:722px;top:316.5px;font-size:12.5px;color:#00008f;">DDI</div>
<div class="t" style="left:768px;top:316.5px;font-size:12.5px;color:#00008f;">DDD</div>
<div class="t" style="left:814px;top:316.5px;font-size:12.5px;color:#00008f;">Celular SMS</div>
<div class="a" style="left:409px;top:333px;width:302px;height:23px;background:#ffffe6;border:1px solid #0078d7"></div>
<div class="a" style="left:722px;top:333px;width:40px;height:23px;background:#fff;border:1px solid #7a7a7a"></div>
<div class="a" style="left:768px;top:333px;width:40px;height:23px;background:#fff;border:1px solid #7a7a7a"></div>
<div class="a" style="left:814px;top:333px;width:132px;height:23px;background:#fff;border:1px solid #7a7a7a"></div>
<div class="t" style="left:409px;top:362.5px;font-size:12.5px;color:#00008f;">Conselho</div>
<div class="t" style="left:549px;top:363.5px;font-size:12.5px;color:#00008f;">Numero Conselho</div>
<div class="t" style="left:660px;top:362.5px;font-size:12.5px;color:#00008f;">UF</div>
<div class="a" style="left:409px;top:380px;width:134px;height:23px;background:#fff;border:1px solid #a8a8b4"></div>
<div class="a" style="left:524px;top:382px;width:17px;height:19px;background:#e1e1e1;border:1px solid #a6a6a6"></div>
<svg class="a" style="left:527px;top:388px" width="10" height="6" viewBox="0 0 10 6"><path d="M0.5 0.5 L5 5 L9.5 0.5" fill="none" stroke="#444" stroke-width="1.1"/></svg>
<div class="a" style="left:549px;top:380px;width:105px;height:23px;background:#fff;border:1px solid #7a7a7a"></div>
<div class="a" style="left:660px;top:380px;width:51px;height:23px;background:#e3e3e3;border:1px solid #c4c4c4"></div>
<svg class="a" style="left:697px;top:388px" width="10" height="6" viewBox="0 0 10 6"><path d="M0.5 0.5 L5 5 L9.5 0.5" fill="none" stroke="#444" stroke-width="1.1"/></svg>
<div class="t" style="left:409px;top:413.5px;font-size:12.5px;color:#00008f;">CBOS(Especialidades)TissV3</div>
<div class="a" style="left:409px;top:429px;width:288px;height:23px;background:#fff;border:1px solid #b4b4b4"></div>
<div class="a" style="left:678px;top:431px;width:17px;height:19px;background:#e1e1e1;border:1px solid #a6a6a6"></div>
<svg class="a" style="left:681px;top:437px" width="10" height="6" viewBox="0 0 10 6"><path d="M0.5 0.5 L5 5 L9.5 0.5" fill="none" stroke="#444" stroke-width="1.1"/></svg>
<div class="a" style="left:408px;top:459px;width:131px;height:23px;background:#e1e1e1;border:1px solid #adadad"></div>
<div class="t" style="left:417px;top:464.5px;font-size:12.4px;color:#000;">Ficha Personalizada</div>
<div class="a" style="left:549px;top:468px;width:13px;height:13px;border:1px solid #333;background:#fff"></div>
<svg class="a" style="left:549px;top:468px" width="13" height="13" viewBox="0 0 13 13"><path d="M2.5 6.5 L5 9.3 L10.5 3" fill="none" stroke="#333" stroke-width="1.3"/></svg>
<div class="t" style="left:565px;top:469px;font-size:12.5px;color:#000;letter-spacing:-0.4px">Ativo</div>
<div class="a" style="left:606px;top:468px;width:13px;height:13px;border:1px solid #333;background:#fff"></div>
<svg class="a" style="left:606px;top:468px" width="13" height="13" viewBox="0 0 13 13"><path d="M2.5 6.5 L5 9.3 L10.5 3" fill="none" stroke="#333" stroke-width="1.3"/></svg>
<div class="t" style="left:622px;top:469px;font-size:12.5px;color:#000;">Possui Agenda</div>
<div class="a" style="left:722px;top:365px;width:224px;height:132px;border:1px solid #d6d6d6"></div>
<div class="a" style="left:728px;top:360px;width:62px;height:10px;background:#f0f0f0"></div>
<div class="t" style="left:730px;top:359px;font-size:12.8px;color:#000;">Comissão</div>
<div class="t" style="left:729px;top:376.5px;font-size:12.5px;color:#00008f;">Valor Consulta</div>
<div class="t" style="left:833px;top:376.5px;font-size:12.5px;color:#00008f;">% Clinica Consulta</div>
<div class="a" style="left:729px;top:393px;width:98px;height:23px;background:#fff;border:1px solid #7a7a7a"></div>
<div class="a" style="left:857px;top:393px;width:60px;height:23px;background:#fff;border:1px solid #7a7a7a"></div>
<svg class="a" style="left:896px;top:395px" width="19" height="19" viewBox="0 0 19 19"><rect x="0.5" y="0.5" width="18" height="18" fill="#dcdcdc" stroke="#adadad"/><path d="M1.5 17.5 L17.5 1.5" stroke="#999" stroke-width="1.2"/><path d="M6 2.5 L9.5 6 H7 V9 H5 V6 H2.5Z" fill="#000"/><path d="M13 16.5 L16.5 13 H14 V10 H12 V13 H9.5Z" fill="#000"/></svg>
<div class="t" style="left:729px;top:421.5px;font-size:12.5px;color:#00008f;">% Procedimento</div>
<div class="t" style="left:857px;top:421.5px;font-size:12.5px;color:#00008f;">% Indicação</div>
<div class="a" style="left:729px;top:439px;width:60px;height:23px;background:#fff;border:1px solid #7a7a7a"></div>
<svg class="a" style="left:768px;top:441px" width="19" height="19" viewBox="0 0 19 19"><rect x="0.5" y="0.5" width="18" height="18" fill="#dcdcdc" stroke="#adadad"/><path d="M1.5 17.5 L17.5 1.5" stroke="#999" stroke-width="1.2"/><path d="M6 2.5 L9.5 6 H7 V9 H5 V6 H2.5Z" fill="#000"/><path d="M13 16.5 L16.5 13 H14 V10 H12 V13 H9.5Z" fill="#000"/></svg>
<div class="a" style="left:857px;top:439px;width:60px;height:23px;background:#fff;border:1px solid #7a7a7a"></div>
<svg class="a" style="left:896px;top:441px" width="19" height="19" viewBox="0 0 19 19"><rect x="0.5" y="0.5" width="18" height="18" fill="#dcdcdc" stroke="#adadad"/><path d="M1.5 17.5 L17.5 1.5" stroke="#999" stroke-width="1.2"/><path d="M6 2.5 L9.5 6 H7 V9 H5 V6 H2.5Z" fill="#000"/><path d="M13 16.5 L16.5 13 H14 V10 H12 V13 H9.5Z" fill="#000"/></svg>
<div class="a" style="left:724px;top:474px;width:13px;height:13px;border:1px solid #333;background:#fff"></div>
<svg class="a" style="left:724px;top:474px" width="13" height="13" viewBox="0 0 13 13"><path d="M2.5 6.5 L5 9.3 L10.5 3" fill="none" stroke="#333" stroke-width="1.3"/></svg>
<div class="t" style="left:740px;top:474.3px;font-size:12.3px;color:#000;">Aplicar taxa por forma de pagamento</div>
<div class="a" style="left:396px;top:504px;width:572px;height:1px;background:#e0e0e0"></div>
<div class="a" style="left:396px;top:505px;width:572px;height:1px;background:#fff"></div>
<div class="a" style="left:630px;top:511px;width:94px;height:24px;background:#e1e1e1;border:1px solid #adadad"></div>
<svg class="a" style="left:648px;top:514px" width="17" height="17" viewBox="0 0 17 17"><rect x="0.8" y="0.8" width="15.4" height="15.4" rx="3" fill="#2a5aa0" stroke="#12305a" stroke-width="1"/><rect x="3.5" y="1.5" width="10" height="8" fill="#f6f0b0" stroke="#8a8040" stroke-width="0.5"/><path d="M5 4 H12 M5 6 H12" stroke="#8a8040" stroke-width="0.6"/><rect x="3" y="11" width="11" height="4.5" fill="#c8d8ec"/></svg>
<div class="t" style="left:669px;top:518.3px;font-size:12.2px;color:#000;font-weight:bold"><u>S</u>alvar</div>
<!-- BOTTOM TABS -->
<div class="a" style="left:0;top:666px;width:1364px;height:37px;background:#f0f0f0"></div>
<div class="a" style="left:0;top:668px;width:168px;height:19px;background:#cce4f7;border:1px solid #3d7fc0;border-bottom:none"></div>
<div class="t" style="left:20px;top:672.5px;font-size:13px">Cadastro de Recursos</div>
<div class="a" style="left:170px;top:669px;width:167px;height:18px;background:#e1e1e1;border:1px solid #c8c8c8;border-bottom:none"></div>
<div class="t" style="left:182px;top:672.5px;font-size:13px">Profissionais e Recursos</div>
<div class="a" style="left:340px;top:669px;width:167px;height:18px;background:#e1e1e1;border:1px solid #c8c8c8;border-bottom:none"></div>
<div class="t" style="left:402px;top:672.5px;font-size:13px">Agenda</div>
<div class="a" style="left:0;top:686px;width:1364px;height:1px;background:#dadada"></div>
</body></html>
